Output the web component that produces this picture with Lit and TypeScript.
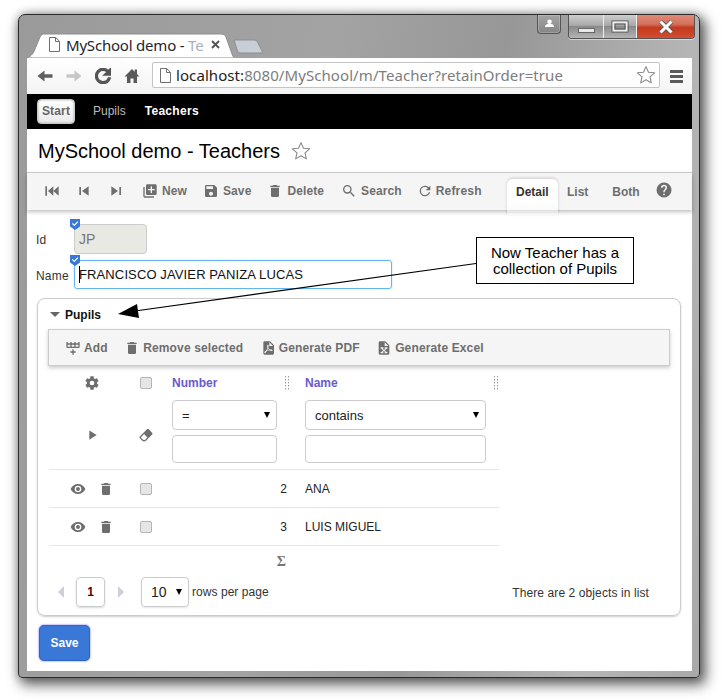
import { LitElement, html, css, svg } from "lit";
import { customElement } from "lit/decorators.js";

const P: Record<string, string> = {
  del: "M19,4H15.5L14.5,3H9.5L8.5,4H5V6H19M6,19A2,2 0 0,0 8,21H16A2,2 0 0,0 18,19V7H6V19Z",
  save: "M15,9H5V5H15M12,19A3,3 0 0,1 9,16A3,3 0 0,1 12,13A3,3 0 0,1 15,16A3,3 0 0,1 12,19M17,3H5C3.89,3 3,3.9 3,5V19A2,2 0 0,0 5,21H19A2,2 0 0,0 21,19V7L17,3Z",
  search: "M9.5,3A6.5,6.5 0 0,1 16,9.5C16,11.11 15.41,12.59 14.44,13.73L14.71,14H15.5L20.5,19L19,20.5L14,15.5V14.71L13.73,14.44C12.59,15.41 11.11,16 9.5,16A6.5,6.5 0 0,1 3,9.5A6.5,6.5 0 0,1 9.5,3M9.5,5C7,5 5,7 5,9.5C5,12 7,14 9.5,14C12,14 14,12 14,9.5C14,7 12,5 9.5,5Z",
  refresh: "M17.65,6.35C16.2,4.9 14.21,4 12,4A8,8 0 0,0 4,12A8,8 0 0,0 12,20C15.73,20 18.84,17.45 19.73,14H17.65C16.83,16.33 14.61,18 12,18A6,6 0 0,1 6,12A6,6 0 0,1 12,6C13.66,6 15.14,6.69 16.22,7.78L13,11H20V4L17.65,6.35Z",
  eye: "M12,9A3,3 0 0,0 9,12A3,3 0 0,0 12,15A3,3 0 0,0 15,12A3,3 0 0,0 12,9M12,17A5,5 0 0,1 7,12A5,5 0 0,1 12,7A5,5 0 0,1 17,12A5,5 0 0,1 12,17M12,4.5C7,4.5 2.73,7.61 1,12C2.73,16.39 7,19.5 12,19.5C17,19.5 21.27,16.39 23,12C21.27,7.61 17,4.5 12,4.5Z",
  help: "M15.07,11.25L14.17,12.17C13.45,12.89 13,13.5 13,15H11V14.5C11,13.39 11.45,12.39 12.17,11.67L13.41,10.41C13.78,10.05 14,9.55 14,9C14,7.89 13.1,7 12,7A2,2 0 0,0 10,9H8A4,4 0 0,1 12,5A4,4 0 0,1 16,9C16,9.88 15.64,10.67 15.07,11.25M13,19H11V17H13M12,2A10,10 0 0,0 2,12A10,10 0 0,0 12,22A10,10 0 0,0 22,12C22,6.47 17.5,2 12,2Z",
  gear: "M12,15.5A3.5,3.5 0 0,1 8.5,12A3.5,3.5 0 0,1 12,8.5A3.5,3.5 0 0,1 15.5,12A3.5,3.5 0 0,1 12,15.5M19.43,12.97C19.47,12.65 19.5,12.33 19.5,12C19.5,11.67 19.47,11.34 19.43,11L21.54,9.37C21.73,9.22 21.78,8.95 21.66,8.73L19.66,5.27C19.54,5.05 19.27,4.96 19.05,5.05L16.56,6.05C16.04,5.66 15.5,5.32 14.87,5.07L14.5,2.42C14.46,2.18 14.25,2 14,2H10C9.75,2 9.54,2.18 9.5,2.42L9.13,5.07C8.5,5.32 7.96,5.66 7.44,6.05L4.95,5.05C4.73,4.96 4.46,5.05 4.34,5.27L2.34,8.73C2.21,8.95 2.27,9.22 2.46,9.37L4.57,11C4.53,11.34 4.5,11.67 4.5,12C4.5,12.33 4.53,12.65 4.57,12.97L2.46,14.63C2.27,14.78 2.21,15.05 2.34,15.27L4.34,18.73C4.46,18.95 4.73,19.03 4.95,18.95L7.44,17.94C7.96,18.34 8.5,18.68 9.13,18.93L9.5,21.58C9.54,21.82 9.75,22 10,22H14C14.25,22 14.46,21.82 14.5,21.58L14.87,18.93C15.5,18.67 16.04,18.34 16.56,17.94L19.05,18.95C19.27,19.03 19.54,18.95 19.66,18.73L21.66,15.27C21.78,15.05 21.73,14.78 21.54,14.63L19.43,12.97Z",
  eraser: "M16.24,3.56L21.19,8.5C21.97,9.29 21.97,10.55 21.19,11.34L12,20.53C10.44,22.09 7.91,22.09 6.34,20.53L2.81,17C2.03,16.21 2.03,14.95 2.81,14.16L13.41,3.56C14.2,2.78 15.46,2.78 16.24,3.56M4.22,15.58L7.76,19.11C8.54,19.9 9.8,19.9 10.59,19.11L14.12,15.58L9.17,10.63L4.22,15.58Z",
  plus: "M19,11H15V15H13V11H9V9H13V5H15V9H19M20,2H8A2,2 0 0,0 6,4V16A2,2 0 0,0 8,18H20A2,2 0 0,0 22,16V4C22,2.89 21.1,2 20,2M4,6H2V20A2,2 0 0,0 4,22H18V20H4V6Z",
  prev: "M5,18V6H7.500V18H5M9,12L19,5V19L9,12Z",
  next: "M17,18H19.500V6H17M5,19L15,12L5,5V19Z",
  first: "M22,5V19L14,12L22,5M14,5V19L6,12L14,5M2,5H4.500V19H2V5Z",
  pdf: "M14,9H19.5L14,3.5V9M7,2H15L21,8V20A2,2 0 0,1 19,22H7C5.89,22 5,21.1 5,20V4A2,2 0 0,1 7,2M11.93,12.44C12.34,13.34 12.86,14.08 13.46,14.59L13.87,14.91C13,15.07 11.8,15.35 10.53,15.84V15.84L10.42,15.88L10.92,14.84C11.37,13.97 11.7,13.18 11.93,12.44M18.41,16.25C18.59,16.07 18.68,15.84 18.69,15.59C18.72,15.39 18.67,15.2 18.57,15.04C18.28,14.57 17.53,14.35 16.29,14.35L15,14.42L14.13,13.84C13.5,13.32 12.93,12.41 12.53,11.28L12.57,11.14C12.9,9.81 13.21,8.2 12.55,7.54C12.39,7.38 12.17,7.3 11.94,7.3H11.7C11.33,7.3 11,7.69 10.91,8.07C10.54,9.4 10.76,10.13 11.13,11.34V11.35C10.88,12.23 10.56,13.25 10.05,14.28L9.09,16.08L8.2,16.57C7,17.32 6.43,18.16 6.32,18.69C6.28,18.88 6.3,19.05 6.37,19.23L6.4,19.28L6.88,19.59L7.32,19.7C8.13,19.7 9.05,18.75 10.29,16.63L10.47,16.56C11.5,16.23 12.78,16 14.5,15.81C15.53,16.32 16.74,16.55 17.5,16.55C17.94,16.55 18.24,16.44 18.41,16.25Z",
  excel: "M6,2H14L20,8V20A2,2 0 0,1 18,22H6A2,2 0 0,1 4,20V4A2,2 0 0,1 6,2M13,3.5V9H18.5L13,3.5M17,11H13V13H14L12,14.67L10,13H11V11H7V13H8L11,15.5L8,18H7V20H11V18H10L12,16.33L14,18H13V20H17V18H16L13,15.5L16,13H17V11Z",
  addrow: "M22,10A2,2 0 0,1 20,12H4A2,2 0 0,1 2,10V3H4V5H8V3H10V5H14V3H16V5H20V3H22V10M4,10H8V7H4V10M10,10H14V7H10V10M20,10V7H16V10H20M11,14H13V17H16V19H13V22H11V19H8V17H11V14Z",
  play: "M8,5.14V19.14L19,12.14L8,5.14Z",
};

const ic = (n: string, cls = "") =>
  html`<svg class="ic ${cls}" viewBox="0 0 24 24"><path d=${P[n]}></path></svg>`;

const star = (cls: string) =>
  html`<svg class=${cls} viewBox="0 0 20 20"><path d="M10 1.6l2.5 5.6 6.1.6-4.6 4.1 1.3 6-5.3-3.1-5.3 3.1 1.3-6L1.4 7.8l6.1-.6z" fill="#fff" stroke="#8a8a8a" stroke-width="1.1" stroke-linejoin="round"></path></svg>`;

const doc = (cls: string) =>
  html`<svg class=${cls} viewBox="0 0 11 15"><path d="M.5.5h6.2l3.8 3.8v10.2H.5z M6.5.7v3.8h3.8" fill="#fff" stroke="#6e6e6e"></path></svg>`;

const badge = html`<svg class="badge" viewBox="0 0 10 11"><path d="M0 0h10v7.5L5 11 0 7.5z" fill="#3a78d8"></path><path d="M2.3 4.4l2 2 3.6-3.8" fill="none" stroke="#fff" stroke-width="1.2"></path></svg>`;

const grip = html`<svg class="grip" viewBox="0 0 5 14"><g fill="#999">${[0, 3, 6, 9, 12].map(
  (y) => svg`<rect x="0" y=${y} width="1" height="1.4"></rect><rect x="3" y=${y} width="1" height="1.4"></rect>`
)}</g></svg>`;

@customElement("app-root")
export class AppRoot extends LitElement {
  static styles = css`
    :host { display: block; position: relative; width: 724px; height: 700px; background: #fff; overflow: hidden;
      font-family: "Liberation Sans", Arial, sans-serif; font-size: 12px; color: #222; }
    * { box-sizing: border-box; }
    .ic { display: block; width: 16px; height: 16px; fill: currentColor; flex: none; }

    .window { margin: 14px 0 0 18px; width: 682px; height: 664px; border: 1px solid #2b2b2b; border-radius: 7px 7px 4px 4px;
      padding: 0 7px 6px 8px; display: flex; flex-direction: column;
      background: linear-gradient(100deg, #9a9a9a 0%, #a3a3a3 40%, #979797 62%, #b5b5b5 85%, #a8a8a8 100%);
      box-shadow: 4px 5px 13px 2px rgba(0,0,0,.6), 0 0 8px rgba(0,0,0,.25); }

    .strip { height: 43px; display: flex; flex: none; position: relative; }
    .tab { position: relative; width: 207px; height: 25px; margin-top: 18px; display: flex; align-items: center; padding: 0 0 2px 22px; flex: none; color: #2a2a2a; }
    .tabbg { position: absolute; left: 0; top: 0; width: 207px; height: 25px; }
    .tab > :not(.tabbg) { position: relative; }
    .tabdoc { width: 11px; height: 15px; flex: none; }
    .tabtitle { margin-left: 6px; width: 143px; white-space: nowrap; font: 15px "Noto Sans", sans-serif; letter-spacing: -.2px; color: #1e2430; }
    .tabtitle em { font-style: normal; color: #a9b0ba; }
    .tabx { width: 9px; height: 9px; margin-left: 2px; flex: none; }
    .newtab { width: 31px; height: 15px; margin: 24px 0 0 -1px; flex: none; }
    .caption { margin: 0 -3px 0 auto; display: flex; align-items: flex-start; gap: 7px; }
    .person { width: 24px; height: 19px; border: 1px solid #555; border-top: 0; border-radius: 0 0 4px 4px; background: linear-gradient(#a4a4a4, #868686); box-shadow: inset 0 0 0 1px rgba(255,255,255,.2); display: flex; justify-content: center; padding-top: 4px; }
    .person svg { width: 11px; height: 9px; }
    .wbtns { display: flex; height: 24px; border: 1px solid #555; border-top: 0; border-radius: 0 0 4px 4px; overflow: hidden; box-shadow: 0 1px 0 rgba(255,255,255,.5); }
    .wb { display: flex; align-items: center; justify-content: center; height: 100%; background: linear-gradient(#cdcdcd 0, #a9a9a9 45%, #8a8a8a 50%, #b4b4b4 100%); border-right: 1px solid #eee; }
    .wb.min { width: 35px; align-items: flex-end; padding-bottom: 5px; } .wb.max { width: 33px; }
    .wb.close { width: 57px; border: 0; background: linear-gradient(#e08a78 0, #d2705c 40%, #c2391f 55%, #d44e30 100%); }
    .wb svg { display: block; }

    .omni { height: 36px; flex: none; background: linear-gradient(#fff, #f3f3f3); display: flex; align-items: center; padding: 0 0 0 10px; }
    .nav { width: 16px; height: 16px; flex: none; margin-right: 13px; }
    .addr { width: 508px; height: 26px; margin: -2px 0 0 -1px; background: #fff; border: 1px solid #c4c4c4; border-radius: 2px; display: flex; align-items: center; padding: 0 3px 0 7px; font: 15px "Noto Sans", sans-serif; letter-spacing: .08px; color: #7d7d7d; white-space: nowrap; }
    .addrdoc { width: 11px; height: 15px; margin-right: 5px; flex: none; }
    .addr b { font-weight: 400; color: #222; }
    .addrstar { width: 20px; height: 20px; margin-left: auto; }
    .menu { width: 13px; margin-left: 10px; display: flex; flex-direction: column; gap: 2px; }
    .menu i { display: block; height: 3px; background: #5a5a5a; }

    .bar { height: 35px; flex: none; background: #000; display: flex; align-items: center; padding: 0 0 2px 10px; color: #ccc; }
    .start { width: 38px; height: 25px; margin-top: 2px; background: linear-gradient(#fff, #e9e9e9); border: 1px solid #c8c8c8; border-radius: 4px; color: #666; font-weight: 700; letter-spacing: .15px; display: flex; align-items: center; justify-content: center; padding-bottom: 2px; box-shadow: inset 0 0 2px #999; }
    .bar .pupils { margin-left: 18px; color: #bbb; }
    .bar .teachers { margin-left: 19px; color: #fff; font-weight: 700; letter-spacing: .3px; }

    .page { flex: 1; background: #fff; display: flex; flex-direction: column; min-height: 0; }
    .title { height: 44px; flex: none; display: flex; align-items: center; padding: 2px 0 0 11px; font-size: 20px; color: #000; border-bottom: 1px solid #ccc; }
    .titlestar { width: 20px; height: 20px; margin: -2px 0 0 11px; }

    .tb { height: 37px; flex: none; background: #f5f5f5; position: relative; display: flex; align-items: center; padding: 0 0 2px 17px; color: #6e6e6e; font-weight: 700; box-shadow: 0 2px 4px rgba(0,0,0,.25); z-index: 1; }
    .nv { display: flex; gap: 16px; margin-right: 18px; }
    .tools { display: flex; gap: 16px; letter-spacing: .1px; }
    .tool { display: flex; align-items: center; gap: 4px; }
    .tool.sr { margin-left: 1px; }
    .tool.rf { margin-left: -1px; gap: 3px; letter-spacing: .2px; }
    .views { position: absolute; left: 480px; top: 6px; display: flex; }
    .view { height: 36px; padding: 6px 9px 0; }
    .view.on { width: 51px; color: #333; background: linear-gradient(#fff 70%, rgba(255,255,255,.0)); border-radius: 6px 6px 0 0; box-shadow: 0 -1px 3px rgba(0,0,0,.18); }
    .view.both { margin-left: 6px; }
    .helpi { margin: 2px 0 0 6px; width: 18px; height: 18px; color: #6e6e6e; }

    .form { padding: 14px 0 0 9px; }
    .row { display: flex; align-items: center; position: relative; }
    .row.r1 { height: 30px; }
    .row.r2 { height: 29px; margin-top: 6px; }
    .lbl { width: 38px; color: #333; font-size: 12px; padding-top: 2px; letter-spacing: .2px; }
    .badge { position: absolute; left: 34px; top: -5px; width: 10px; height: 11px; z-index: 2; }
    .ro { width: 73px; height: 30px; background: #e9e9e4; border: 1px solid #ccc; border-radius: 4px; color: #777; font: 14px "Liberation Sans", sans-serif; padding: 0 4px; }
    .ed { width: 318px; height: 29px; border: 1px solid #66b5f0; border-radius: 3px; display: flex; align-items: center; padding: 0 4px 1px; font-size: 13px; letter-spacing: .12px; color: #111; box-shadow: 0 0 2px rgba(102,181,240,.5); }
    .ed i { display: block; width: 1px; height: 17px; background: #000; margin-right: -1px; }

    .panel { margin: 9px 11px 0 10px; height: 318px; border: 1px solid #ccc; border-radius: 8px; box-shadow: 0 1px 2px rgba(0,0,0,.2); padding: 0 10px; }
    .phead { height: 30px; display: flex; align-items: center; padding: 1px 0 0 2px; font-weight: 700; color: #111; }
    .tri { width: 0; height: 0; border-left: 5px solid transparent; border-right: 5px solid transparent; border-top: 5px solid #666; margin-right: 5px; }
    .ptb { height: 37px; background: #f5f5f5; border: 1px solid #ccc; box-shadow: 0 2px 4px rgba(0,0,0,.2); display: flex; align-items: center; gap: 16.5px; padding-left: 16px; color: #6e6e6e; font-weight: 700; letter-spacing: .13px; }
    .ptb .tool { gap: 3px; }

    .grid { display: grid; grid-template-columns: 80px 33px 134px 203px; width: 450px; margin-left: 1px; }
    .c { display: flex; align-items: center; }
    .hd { height: 34px; }
    .hd.n { color: #6a5acd; font-weight: 700; padding-left: 10px; position: relative; justify-content: space-between; padding-right: 6px; }
    .hd.n.last { padding: 0 0 0 9px; }
    .grip { width: 5px; height: 14px; display: block; }
    .ctr { justify-content: center; color: #6e6e6e; }
    .cb { width: 12px; height: 12px; background: #e6e6e6; border: 1px solid #b5b5b5; border-radius: 2px; display: block; }
    .act { gap: 12px; justify-content: flex-end; padding-right: 15px; color: #6e6e6e; }
    .act.one { padding-right: 29px; }
    .flt { height: 70px; border-bottom: 1px solid #e6e6e6; }
    .ftc { flex-direction: column; align-items: flex-start; padding-left: 10px; gap: 5px; }
    .ftc.nm { padding-left: 9px; }
    .sel { height: 30px; width: 105px; border: 1px solid #ccc; border-radius: 4px; background: #fff; display: flex; align-items: center; justify-content: space-between; padding: 0 6px 0 9px; color: #222; font-size: 13px; }
    .sel.w { width: 181px; }
    .sel::after { content: ""; border-left: 3.5px solid transparent; border-right: 3.5px solid transparent; border-top: 6px solid #000; }
    .inp { height: 28px; width: 105px; border: 1px solid #ccc; border-radius: 4px; background: #fff; display: block; padding: 0; }
    .inp.w { width: 181px; }
    .data { height: 38px; border-bottom: 1px solid #e6e6e6; }
    .num { justify-content: flex-end; padding-right: 9px; color: #222; }
    .txt { padding-left: 9px; color: #222; }
    .tot { grid-column: 3; height: 33px; justify-content: flex-end; padding: 0 10px 2px 0; color: #777; font: 700 14px "Liberation Serif", serif; }
    .pager { display: flex; align-items: center; height: 30px; margin-top: -2px; padding-left: 10px; position: relative; }
    .ar { width: 0; height: 0; border-top: 6px solid transparent; border-bottom: 6px solid transparent; flex: none; }
    .ar.l { border-right: 6px solid #ccd0d8; }
    .ar.r { border-left: 6px solid #ccd0d8; margin-left: 13px; }
    .pg { width: 29px; height: 30px; margin-left: 12px; border: 1px solid #ccc; border-radius: 4px; display: flex; align-items: center; justify-content: center; font-weight: 700; color: #600000; box-shadow: 0 1px 2px rgba(0,0,0,.15); }
    .ps { width: 48px; height: 30px; margin-left: 17px; border: 1px solid #ccc; border-radius: 4px; display: flex; align-items: center; justify-content: space-between; padding: 0 6px 0 9px; font-size: 14px; color: #222; box-shadow: 0 1px 2px rgba(0,0,0,.1); }
    .ps::after { content: ""; border-left: 3.5px solid transparent; border-right: 3.5px solid transparent; border-top: 6px solid #000; }
    .rpp { margin-left: 3px; color: #333; padding-bottom: 1px; letter-spacing: .05px; }
    .count { margin-left: auto; margin-right: 21px; padding-top: 1px; color: #333; letter-spacing: .1px; }

    .savewrap { padding: 9px 0 0 12px; }
    .savebtn { width: 51px; height: 36px; background: #3a78d8; border: 1px solid #2f66c2; border-radius: 5px; color: #fff; font-weight: 700; display: flex; align-items: center; justify-content: center; box-shadow: 0 0 2px #4a4ae8; }

    .arrow { position: absolute; left: 0; top: 0; width: 724px; height: 700px; pointer-events: none; z-index: 3; }
    .note { position: absolute; left: 476px; top: 237px; width: 158px; height: 47px; background: #fff; border: 1px solid #000; z-index: 4;
      display: flex; align-items: center; justify-content: center; text-align: center; font-size: 15px; line-height: 16px; color: #000; }
  `;

  render() {
    return html`
      <div class="window">
        <div class="strip">
          <div class="tab">
            <svg class="tabbg" viewBox="0 0 207 25"><path d="M0 25C5 23 7 19 8 16L13 4C14 1.500 16 1 18 1H194C197 1 198 2 199 4L205 21C206 24 207 25 209 25Z" fill="#fff" stroke="#8d8d8d"></path></svg>
            ${doc("tabdoc")}
            <div class="tabtitle">MySchool demo - <em>Te</em></div>
            <svg class="tabx" viewBox="0 0 9 9"><path d="M1 1l7 7M8 1l-7 7" stroke="#555" stroke-width="2"></path></svg>
          </div>
          <svg class="newtab" viewBox="0 0 31 15"><path d="M1 1H21C23 1 24 2 25 4L30 14H8C6 14 5 13 4.500 12Z" fill="#c8ced6" stroke="#8b8f96"></path></svg>
          <div class="caption">
            <div class="person"><svg viewBox="0 0 12 10"><circle cx="6" cy="3" r="2.500" fill="#fff"></circle><path d="M1 9c0-3 2-3.500 5-3.500S11 6 11 9z" fill="#fff"></path></svg></div>
            <div class="wbtns">
              <div class="wb min"><svg width="17" height="5" viewBox="0 0 17 5"><rect x=".5" y=".5" width="16" height="4" fill="#e8e8e8" stroke="#666"></rect></svg></div>
              <div class="wb max"><svg width="18" height="13" viewBox="0 0 18 13"><rect x="1" y="1" width="16" height="11" fill="none" stroke="#555" stroke-width="1"></rect><rect x="2.500" y="2.500" width="13" height="8" fill="none" stroke="#eee" stroke-width="2"></rect><rect x="4" y="4" width="10" height="5" fill="none" stroke="#555"></rect></svg></div>
              <div class="wb close"><svg width="16" height="14" viewBox="0 0 16 14"><path d="M2.500 1.500L13.500 12.500M13.500 1.500L2.500 12.500" stroke="#555" stroke-width="4.500"></path><path d="M2.500 1.500L13.500 12.500M13.500 1.500L2.500 12.500" stroke="#fff" stroke-width="3"></path></svg></div>
            </div>
          </div>
        </div>

        <div class="omni">
          <svg class="nav" viewBox="0 0 16 16"><path d="M15.500 6.300H7.500V2.500L.5 8l7 5.500V9.700h8z" fill="#5f5f5f"></path></svg>
          <svg class="nav" viewBox="0 0 16 16"><path d="M.5 6.300h8V2.500l7 5.500-7 5.500V9.700h-8z" fill="#c6c6c6"></path></svg>
          <svg class="nav" viewBox="3.500 3.500 17 17"><path d=${P.refresh} fill="#555" stroke="#555" stroke-width="1.500"></path></svg>
          <svg class="nav" viewBox="0 0 16 16"><path d="M8 1L.5 8.500H3V15h3.500v-4.500h3V15H13V8.500h2.500L13 6V1.500h-2.300v2.200z" fill="#5a5a5a"></path></svg>
          <div class="addr">
            ${doc("addrdoc")}
            <span><b>localhost:</b>8080/MySchool/m/Teacher?retainOrder=true</span>
            ${star("addrstar")}
          </div>
          <div class="menu"><i></i><i></i><i></i></div>
        </div>

        <div class="bar">
          <div class="start">Start</div>
          <span class="pupils">Pupils</span>
          <span class="teachers">Teachers</span>
        </div>

        <div class="page">
          <div class="title"><span>MySchool demo - Teachers</span>${star("titlestar")}</div>
          <div class="tb">
            <div class="nv">${ic("first")}${ic("prev")}${ic("next")}</div>
            <div class="tools">
              <div class="tool">${ic("plus")}<span>New</span></div>
              <div class="tool">${ic("save")}<span>Save</span></div>
              <div class="tool">${ic("del")}<span>Delete</span></div>
              <div class="tool sr">${ic("search")}<span>Search</span></div>
              <div class="tool rf">${ic("refresh")}<span>Refresh</span></div>
            </div>
            <div class="views">
              <div class="view on">Detail</div>
              <div class="view">List</div>
              <div class="view both">Both</div>
              ${ic("help", "helpi")}
            </div>
          </div>

          <div class="form">
            <div class="row r1"><span class="lbl">Id</span>${badge}<input class="ro" value="JP" readonly /></div>
            <div class="row r2"><span class="lbl">Name</span>${badge}<div class="ed"><i></i><span>FRANCISCO JAVIER PANIZA LUCAS</span></div></div>
          </div>

          <div class="panel">
            <div class="phead"><span class="tri"></span>Pupils</div>
            <div class="ptb">
              <div class="tool">${ic("addrow")}<span>Add</span></div>
              <div class="tool">${ic("del")}<span>Remove selected</span></div>
              <div class="tool">${ic("pdf")}<span>Generate PDF</span></div>
              <div class="tool">${ic("excel")}<span>Generate Excel</span></div>
            </div>
            <div class="grid">
              <div class="c hd act one">${ic("gear")}</div>
              <div class="c hd ctr"><i class="cb"></i></div>
              <div class="c hd n"><span>Number</span>${grip}</div>
              <div class="c hd n last"><span>Name</span>${grip}</div>

              <div class="c flt act one">${ic("play")}</div>
              <div class="c flt ctr">${ic("eraser")}</div>
              <div class="c flt ftc"><div class="sel">=</div><input class="inp" /></div>
              <div class="c flt ftc nm"><div class="sel w">contains</div><input class="inp w" /></div>

              <div class="c data act">${ic("eye")}${ic("del")}</div>
              <div class="c data ctr"><i class="cb"></i></div>
              <div class="c data num">2</div>
              <div class="c data txt">ANA</div>

              <div class="c data act">${ic("eye")}${ic("del")}</div>
              <div class="c data ctr"><i class="cb"></i></div>
              <div class="c data num">3</div>
              <div class="c data txt">LUIS MIGUEL</div>

              <div class="c tot">Σ</div>
            </div>
            <div class="pager">
              <i class="ar l"></i>
              <div class="pg">1</div>
              <i class="ar r"></i>
              <div class="ps">10</div>
              <span class="rpp">rows per page</span>
              <span class="count">There are 2 objects in list</span>
            </div>
          </div>

          <div class="savewrap"><div class="savebtn">Save</div></div>
        </div>
      </div>

      <svg class="arrow" viewBox="0 0 724 700"><path d="M476 263.500L135 311" stroke="#000" stroke-width="1.200" fill="none"></path><path d="M118 314L137 304L139 318Z" fill="#000"></path></svg>
      <div class="note">Now Teacher has a<br />collection of Pupils</div>
    `;
  }
}
